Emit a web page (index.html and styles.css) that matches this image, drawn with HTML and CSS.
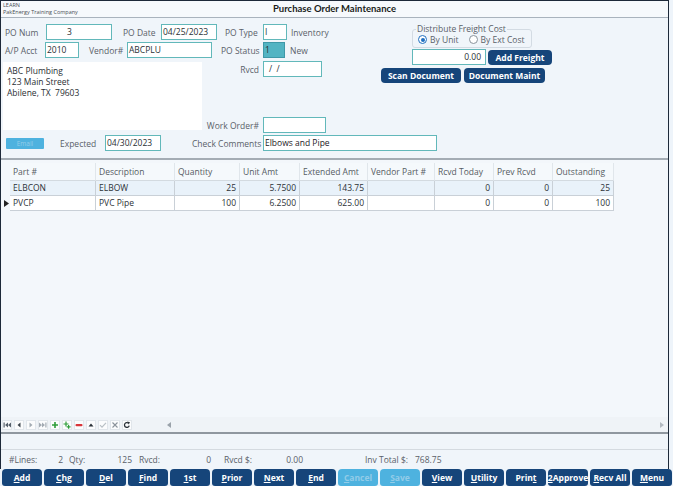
FILE: index.html
```html
<!DOCTYPE html>
<html>
<head>
<meta charset="utf-8">
<link rel="stylesheet" href="styles.css">
</head>
<body>
<div class="frame">
  <header class="titlebar">
    <div class="company"><div>LEARN</div><div>PakEnergy Training Company</div></div>
    <div class="title">Purchase Order Maintenance</div>
    <div></div>
  </header>

  <section class="form">
    <div class="top">
      <div class="leftcol">
        <div class="row">
          <span class="l l-ponum">PO Num</span><span class="in w-ponum">3</span>
          <span class="l l-podate">PO Date</span><span class="in w-date">04/25/2023</span>
          <span class="l l-potype">PO Type</span><span class="in w-type">I</span><span class="note n-inv">Inventory</span>
        </div>
        <div class="row row2">
          <span class="l l-apacct">A/P Acct</span><span class="in w-acct">2010</span>
          <span class="l l-vendor">Vendor#</span><span class="in w-vendor">ABCPLU</span>
          <span class="l l-status">PO Status</span><span class="in w-status teal">1</span><span class="note n-new">New</span>
        </div>
        <div class="middle">
          <div class="address">
            <div>ABC Plumbing</div>
            <div>123 Main Street</div>
            <div>Abilene, TX&nbsp; 79603</div>
          </div>
          <div class="midright">
            <div class="row">
              <span class="l l-rvcd">Rvcd</span><span class="in w-rvcd">/&nbsp; /</span>
            </div>
            <div class="row row-wo">
              <span class="l l-rvcd">Work Order#</span><span class="in w-wo"></span>
            </div>
          </div>
        </div>
      </div>
      <div class="rightcol">
        <fieldset class="freight">
          <legend>Distribute Freight Cost</legend>
          <div class="radios">
            <span class="radio on"><span class="dot"></span>By Unit</span>
            <span class="radio"><span class="dot"></span>By Ext Cost</span>
          </div>
        </fieldset>
        <div class="frow">
          <span class="in w-freight">0.00</span>
          <span class="btn b-addfreight">Add Freight</span>
        </div>
        <div class="srow">
          <span class="btn b-scan">Scan Document</span>
          <span class="btn b-docmaint">Document Maint</span>
        </div>
      </div>
    </div>
    <div class="row bottomrow">
      <span class="email">Email</span>
      <span class="l l-expected">Expected</span><span class="in w-date">04/30/2023</span>
      <span class="l l-check">Check Comments</span><span class="in w-comments dark">Elbows and Pipe</span>
    </div>
  </section>

  <section class="gridarea">
    <div class="grid">
      <div class="c ind hd"></div>
      <div class="c hd">Part #</div>
      <div class="c hd">Description</div>
      <div class="c hd">Quantity</div>
      <div class="c hd">Unit Amt</div>
      <div class="c hd">Extended Amt</div>
      <div class="c hd">Vendor Part #</div>
      <div class="c hd">Rcvd Today</div>
      <div class="c hd">Prev Rcvd</div>
      <div class="c hd">Outstanding</div>

      <div class="c ind"></div>
      <div class="c alt">ELBCON</div>
      <div class="c alt">ELBOW</div>
      <div class="c alt num">25</div>
      <div class="c alt num">5.7500</div>
      <div class="c alt num">143.75</div>
      <div class="c alt"></div>
      <div class="c alt num">0</div>
      <div class="c alt num">0</div>
      <div class="c alt num">25</div>

      <div class="c ind"><svg width="5" height="7" viewBox="0 0 5 7"><path d="M0 0L5 3.5L0 7Z" fill="#222"/></svg></div>
      <div class="c">PVCP</div>
      <div class="c">PVC Pipe</div>
      <div class="c num">100</div>
      <div class="c num">6.2500</div>
      <div class="c num">625.00</div>
      <div class="c"></div>
      <div class="c num">0</div>
      <div class="c num">0</div>
      <div class="c num">100</div>
    </div>
  </section>

  <div class="navbar">
    <div class="navicons">
      <span class="ni"><svg viewBox="0 0 8 8"><rect x="0.5" y="1.5" width="1.2" height="5" fill="#56606b"/><path d="M5 1.5V6.5L2 4Z M8 1.5V6.5L5 4Z" fill="#56606b"/></svg></span>
      <span class="ni"><svg viewBox="0 0 8 8"><path d="M5.5 1.5V6.5L2.5 4Z" fill="#3c444c"/></svg></span>
      <span class="ni"><svg viewBox="0 0 8 8"><path d="M2.5 1.5V6.5L5.5 4Z" fill="#a3abb3"/></svg></span>
      <span class="ni"><svg viewBox="0 0 8 8"><path d="M0 1.5V6.5L3 4Z M3 1.5V6.5L6 4Z" fill="#a3abb3"/><rect x="6.3" y="1.5" width="1.2" height="5" fill="#a3abb3"/></svg></span>
      <span class="ni"><svg viewBox="0 0 8 8"><path d="M3.2 1H4.8V3.2H7V4.8H4.8V7H3.2V4.8H1V3.2H3.2Z" fill="#2f9d3a"/></svg></span>
      <span class="ni"><svg viewBox="0 0 8 8"><path d="M2.4 0.5H3.6V2.4H5.5V3.6H3.6V5.5H2.4V3.6H0.5V2.4H2.4Z" fill="#2f9d3a"/><path d="M5 4H6.2V5.3H7.5V6.5H6.2V7.8H5V6.5H3.7V5.3H5Z" fill="#2f9d3a"/></svg></span>
      <span class="ni"><svg viewBox="0 0 8 8"><rect x="0.5" y="3" width="7" height="2.2" rx="1" fill="#d8343a"/></svg></span>
      <span class="ni"><svg viewBox="0 0 8 8"><path d="M1.5 5.5L4 2.5L6.5 5.5Z" fill="#2a3138"/></svg></span>
      <span class="ni"><svg viewBox="0 0 8 8"><path d="M1 4.2L3 6.2L7 1.8" fill="none" stroke="#b9c0c6" stroke-width="1.2"/></svg></span>
      <span class="ni"><svg viewBox="0 0 8 8"><path d="M1.5 1.5L6.5 6.5M6.5 1.5L1.5 6.5" stroke="#8b939b" stroke-width="1.1"/></svg></span>
      <span class="ni"><svg viewBox="0 0 8 8"><path d="M6.2 4.6A2.4 2.4 0 1 1 5.4 2.1" fill="none" stroke="#2a3138" stroke-width="1.3"/><path d="M4.2 0.6L7 1.2L5.6 3.6Z" fill="#2a3138"/></svg></span>
    </div>
    <div class="hscroll">
      <svg width="4" height="6" viewBox="0 0 4 6"><path d="M4 0V6L0 3Z" fill="#9aa2aa"/></svg>
      <svg width="4" height="6" viewBox="0 0 4 6"><path d="M0 0V6L4 3Z" fill="#b3bac1"/></svg>
    </div>
  </div>
  <div class="strip"></div>

  <div class="summary">
    <span class="s-lbl s1">#Lines:</span><span class="s-val v1">2</span>
    <span class="s-lbl s2">Qty:</span><span class="s-val v2">125</span>
    <span class="s-lbl s3">Rvcd:</span><span class="s-val v3">0</span>
    <span class="s-lbl s4">Rvcd $:</span><span class="s-val v4">0.00</span>
    <span class="s-lbl s5">Inv Total $:</span><span class="s-val v5">768.75</span>
  </div>
</div>

<nav class="buttons">
  <span class="btn bb"><u>A</u>dd</span>
  <span class="btn bb"><u>C</u>hg</span>
  <span class="btn bb"><u>D</u>el</span>
  <span class="btn bb"><u>F</u>ind</span>
  <span class="btn bb"><u>1</u>st</span>
  <span class="btn bb"><u>P</u>rior</span>
  <span class="btn bb"><u>N</u>ext</span>
  <span class="btn bb"><u>E</u>nd</span>
  <span class="btn bb off"><u>C</u>ancel</span>
  <span class="btn bb off"><u>S</u>ave</span>
  <span class="btn bb"><u>V</u>iew</span>
  <span class="btn bb"><u>U</u>tility</span>
  <span class="btn bb">Prin<u>t</u></span>
  <span class="btn bb"><u>2</u>Approve</span>
  <span class="btn bb"><u>R</u>ecv All</span>
  <span class="btn bb"><u>M</u>enu</span>
</nav>
</body>
</html>
```

FILE: styles.css
```css
* { box-sizing: border-box; margin: 0; padding: 0; }

html, body {
  width: 673px;
  height: 486px;
  overflow: hidden;
}

body {
  background: #eef4fa;
  font-family: "Open Sans", "Noto Sans", sans-serif;
  font-size: 8.5px;
  color: #5a6169;
}

.frame {
  width: 669px;
  height: 469px;
  border: 1px solid #1d2939;
  border-bottom: none;
  background: #f0f5fa;
  display: flex;
  flex-direction: column;
}

/* title bar */
.titlebar {
  height: 17px;
  flex: none;
  display: grid;
  grid-template-columns: 1fr auto 1fr;
  background: #f6f9fc;
  border-bottom: 1px solid #a9b3bd;
}
.company {
  font-size: 5.5px;
  line-height: 6.5px;
  color: #4a4f55;
  padding: 1px 0 0 2px;
  white-space: nowrap;
}
.title {
  font-family: Lato, "Open Sans", sans-serif;
  font-weight: bold;
  font-size: 9.5px;
  line-height: 16px;
  color: #1a1d20;
}

/* form */
.form {
  height: 140px;
  flex: none;
  padding-top: 6px;
}
.top { display: flex; }
.leftcol { width: 380px; flex: none; }
.row {
  display: flex;
  align-items: center;
  height: 16px;
  white-space: nowrap;
}
.row2 { margin-top: 2px; }

.l { display: block; flex: none; }
.in {
  display: block;
  flex: none;
  height: 16px;
  background: #fff;
  border: 1px solid #62b8ba;
  color: #2a2f34;
  line-height: 14px;
  padding-left: 1px;
  overflow: hidden;
}
.in.teal { background: #53b4c3; border-color: #3f98a8; }
.in.dark { color: #1c2025; }
.note { display: block; }

.l-ponum { width: 45px; padding-left: 4px; }
.w-ponum { width: 66px; padding-left: 20px; }
.l-podate { width: 49px; padding-left: 11px; }
.w-date { width: 56px; }
.l-potype { width: 46px; padding-left: 8px; }
.w-type { width: 24px; }
.n-inv { padding-left: 4px; }

.l-apacct { width: 44px; padding-left: 4px; }
.w-acct { width: 34px; }
.l-vendor { width: 48px; padding-left: 10px; }
.w-vendor { width: 85px; }
.l-status { width: 51px; padding-left: 9px; }
.w-status { width: 22px; }
.n-new { padding-left: 5px; }

.middle { display: flex; }
.address {
  margin: 4px 0 0 2px;
  width: 199px;
  height: 68px;
  background: #fff;
  color: #2a2f34;
  padding: 3px 0 0 4px;
  line-height: 11px;
}
.midright { margin-top: 3px; }
.l-rvcd { width: 61px; text-align: right; padding-right: 4px; }
.w-rvcd { width: 59px; padding-left: 5px; }
.w-wo { width: 63px; }
.row-wo { margin-top: 40px; }

.bottomrow { margin-top: 2px; }
.email {
  display: block;
  flex: none;
  margin-left: 5px;
  width: 38px;
  height: 11px;
  background: #4eb2df;
  color: #93cde9;
  font-size: 6.5px;
  line-height: 11px;
  text-align: center;
  border-radius: 1px;
}
.l-expected { width: 61px; padding-left: 16px; }
.l-check { width: 102px; padding-left: 31px; }
.w-comments { width: 174px; }

/* freight */
.rightcol { flex: none; width: 288px; }
.freight {
  margin-left: 31px;
  width: 120px;
  border: 1px solid #d3dbe3;
  border-radius: 3px;
  padding: 0 0 2px 5px;
}
.freight legend {
  padding: 0 1px;
  margin-left: -2px;
  line-height: 10px;
  color: #5a6169;
}
.radios { display: flex; height: 11px; align-items: center; }
.radio { display: flex; align-items: center; white-space: nowrap; }
.radio + .radio { margin-left: 10px; }
.dot {
  width: 9px;
  height: 9px;
  border: 1px solid #8a939c;
  border-radius: 50%;
  margin-right: 3px;
  background: #fff;
  position: relative;
}
.radio.on .dot { border-color: #1f6fc0; }
.radio.on .dot::after {
  content: "";
  position: absolute;
  left: 1.5px;
  top: 1.5px;
  width: 4px;
  height: 4px;
  border-radius: 50%;
  background: #1f6fc0;
}
.frow { display: flex; align-items: center; margin: 1px 0 0 31px; }
.w-freight { width: 74px; text-align: right; padding-right: 4px; }
.btn {
  display: flex;
  align-items: center;
  justify-content: center;
  flex: none;
  background: #16457a;
  color: #fff;
  font-weight: bold;
  border-radius: 4px;
  white-space: nowrap;
}
.b-addfreight { width: 64px; height: 15px; margin-left: 2px; }
.srow { display: flex; margin-top: 3px; gap: 3px; }
.b-scan { width: 80px; height: 15px; }
.b-docmaint { width: 81px; height: 15px; }

/* grid */
.gridarea {
  height: 259px;
  flex: none;
  border-top: 2px solid #a4acb4;
  background: #f3f7fb;
  padding: 3px 0 0 2px;
}
.grid {
  display: grid;
  grid-template-columns: 7px 86px 79px 65px 60px 68px 67px 59px 59px 61px;
  grid-auto-rows: 15px;
  grid-template-rows: 18px;
  width: 611px;
}
.c {
  border-right: 1px solid #c9d0d7;
  border-bottom: 1px solid #c9d0d7;
  padding: 0 3px;
  line-height: 14px;
  color: #2c3136;
  background: #fff;
  white-space: nowrap;
  overflow: hidden;
}
.c.hd {
  background: #f5f9fc;
  color: #555c63;
  line-height: 18px;
  border-right-color: #e0e6eb;
  border-bottom-color: #d3dae0;
}
.c.alt { background: #e9f2fa; }
.c.num { text-align: right; }
.c.ind {
  border: none;
  background: transparent;
  padding: 0 0 0 1px;
  display: flex;
  align-items: center;
}

/* navigator */
.navbar {
  height: 17px;
  flex: none;
  border-bottom: 2px solid #8f979f;
  display: flex;
  align-items: center;
  background: #eff3f7;
}
.navicons { display: flex; gap: 2px; margin-left: 1px; }
.ni {
  width: 10px;
  height: 10px;
  background: #fbfcfd;
  border: 1px solid #e1e6eb;
  display: flex;
  align-items: center;
  justify-content: center;
}
.ni svg { width: 8px; height: 8px; }
.hscroll {
  flex: 1;
  display: flex;
  justify-content: space-between;
  align-items: center;
  margin-left: 35px;
  padding-right: 4px;
}

.strip {
  height: 16px;
  flex: none;
  border-bottom: 1px solid #d4dae0;
}

.summary {
  height: 19px;
  flex: none;
  display: flex;
  align-items: center;
  white-space: nowrap;
  color: #5a6169;
}
.s-lbl, .s-val { display: block; flex: none; }
.s-val { text-align: right; }
.s1 { margin-left: 8px; width: 40px; }
.v1 { width: 14px; }
.s2 { margin-left: 6px; width: 30px; }
.v2 { width: 33px; }
.s3 { margin-left: 7px; width: 40px; }
.v3 { width: 32px; }
.s4 { margin-left: 13px; width: 40px; }
.v4 { width: 39px; }
.s5 { margin-left: 62px; width: 50px; }
.v5 { text-align: left; }

/* bottom buttons */
.buttons {
  display: flex;
  gap: 2px;
  padding-left: 2px;
  height: 17px;
}
.bb {
  width: 40px;
  height: 17px;
  border-radius: 4px 4px 3px 3px;
  font-size: 8.5px;
}
.bb u { text-decoration: underline; text-underline-offset: 1px; }
.bb.off { background: #4eb2df; color: #92cce8; }
```
